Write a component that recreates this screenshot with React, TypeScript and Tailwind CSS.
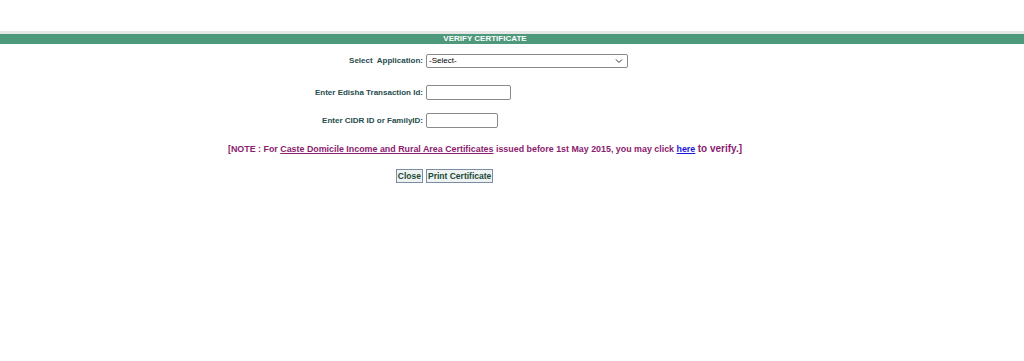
export default function App() {
  const label = "text-right pr-[3px] text-[8px] font-bold text-[#264d4d]";
  const btn =
    "h-[14px] px-[1px] border border-[#7b8ca6] bg-[#eef2f1] text-[8.5px] font-bold text-[#1c4a3a] leading-none";
  return (
    <div className="w-[1024px] h-[361px] bg-white font-['Liberation_Sans',Arial,sans-serif]">
      <div className="h-[31px]" />
      <div className="h-[3px] bg-[#e6e8e8]" />
      <div className="h-[10px] bg-[#4e987c] flex items-center">
        <span className="w-[970px] text-center text-[8px] font-bold text-white leading-none">VERIFY CERTIFICATE</span>
      </div>
      <div className="w-[970px]">
        <div className="grid grid-cols-[426px_1fr] items-center mt-[10px]">
          <div className={label}>Select&nbsp; Application:</div>
          <div className="h-[14px] w-[202px] border border-[#8a8a8a] rounded-[2px] flex items-center justify-between px-[2px]">
            <span className="text-[8px] text-black">-Select-</span>
            <svg width="8" height="6" viewBox="0 0 8 6" className="mr-[2px]">
              <path d="M1 1.5 L4 4.5 L7 1.5" fill="none" stroke="#333" strokeWidth="1" />
            </svg>
          </div>
          <div className={label + " mt-[17px]"}>Enter Edisha Transaction Id:</div>
          <div className="mt-[17px] h-[15px] w-[85px] border border-[#8a8a8a] rounded-[2px]" />
          <div className={label + " mt-[13px]"}>Enter CIDR ID or FamilyID:</div>
          <div className="mt-[13px] h-[15px] w-[72px] border border-[#8a8a8a] rounded-[2px]" />
        </div>
        <p className="mt-[16px] text-center text-[8.9px] font-bold text-[#8b1c6e] leading-none">
          [NOTE : For <span className="underline">Caste Domicile Income and Rural Area Certificates</span> issued before 1st May 2015, you may click{" "}
          <span className="underline text-[#1a1adb]">here</span> <span className="text-[10px]">to verify.]</span>
        </p>
        <div className="grid grid-cols-[426px_1fr] mt-[15px]">
          <div className="flex justify-end pr-[3px]">
            <button className={btn}>Close</button>
          </div>
          <div className="flex">
            <button className={btn}>Print Certificate</button>
          </div>
        </div>
      </div>
    </div>
  );
}
